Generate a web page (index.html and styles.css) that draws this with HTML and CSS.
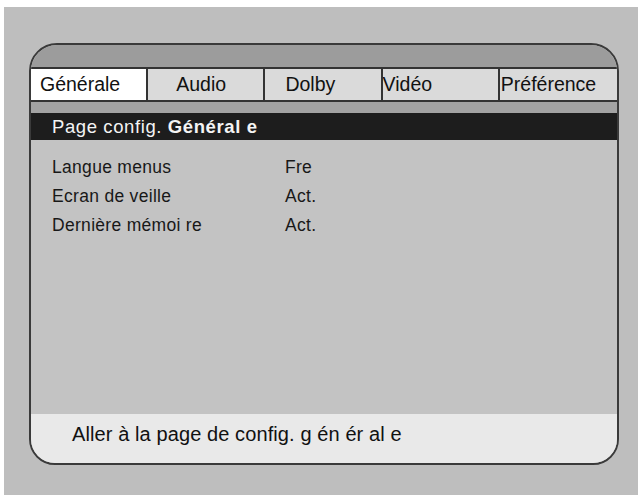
FILE: index.html
```html
<!DOCTYPE html>
<html lang="fr">
<head>
<meta charset="utf-8">
<title>Page config. Générale</title>
<link rel="stylesheet" href="styles.css">
</head>
<body>
<div class="screen">
  <div class="panel">
    <div class="topbar"></div>
    <div class="tabs">
      <div class="tab active t1">Générale</div>
      <div class="tab t2">Audio</div>
      <div class="tab t3">Dolby</div>
      <div class="tab t4">Vidéo</div>
      <div class="tab t5">Préférence</div>
    </div>
    <div class="strip"></div>
    <div class="title">Page config. <b>Général e</b></div>
    <div class="content">
      <div class="row"><span>Langue menus</span><span class="val">Fre</span></div>
      <div class="row"><span>Ecran de veille</span><span class="val">Act.</span></div>
      <div class="row"><span>Dernière mémoi re</span><span class="val">Act.</span></div>
    </div>
    <div class="footer">Aller à la page de config. g én ér al e</div>
  </div>
</div>
</body>
</html>
```

FILE: styles.css
```css
html, body {
  margin: 0;
  padding: 0;
  background: #ffffff;
}

body {
  font-family: "Liberation Sans", Arial, sans-serif;
  color: #161616;
}

.screen {
  margin: 7px 0 0 4px;
  width: 634px;
  height: 488px;
  box-sizing: border-box;
  padding: 36px 0 0 25px;
  background: #bebebe;
}

.panel {
  width: 590px;
  height: 422px;
  box-sizing: border-box;
  border: 2px solid #3a3a3a;
  border-radius: 28px 28px 26px 26px;
  overflow: hidden;
  display: flex;
  flex-direction: column;
  background: #c3c3c3;
}

.topbar {
  height: 22px;
  background: #9c9c9c;
}

.tabs {
  display: grid;
  grid-template-columns: repeat(5, 1fr);
  height: 35px;
  box-sizing: border-box;
  border-top: 2px solid #333333;
  border-bottom: 2px solid #333333;
}

.tab {
  background: #dadada;
  border-right: 2px solid #333333;
  font-size: 19.5px;
  line-height: 31px;
  white-space: nowrap;
  overflow: hidden;
  color: #111111;
}

.tab:last-child {
  border-right: none;
}

.tab.active {
  background: #ffffff;
}

.t1 { padding-left: 9px; }
.t2 { padding-left: 28px; }
.t3 { padding-left: 20px; }
.t4 { padding-left: 0; }
.t5 { padding-left: 1px; }

.strip {
  height: 11px;
  background: #a3a3a3;
}

.title {
  height: 27px;
  background: #1d1d1d;
  color: #f4f4f4;
  font-size: 18.5px;
  letter-spacing: 0.6px;
  line-height: 27px;
  padding-left: 21px;
  white-space: nowrap;
}

.title b {
  font-weight: bold;
}

.content {
  flex: 1;
  padding: 13px 0 0 21px;
}

.row {
  display: grid;
  grid-template-columns: 233px auto;
  font-size: 17.5px;
  letter-spacing: 0.3px;
  line-height: 29px;
  color: #181818;
}

.footer {
  height: 49px;
  box-sizing: border-box;
  background: #e9e9e9;
  padding: 9px 0 0 41px;
  font-size: 20px;
  line-height: 23px;
  letter-spacing: 0.1px;
  color: #111111;
  white-space: nowrap;
}
```
